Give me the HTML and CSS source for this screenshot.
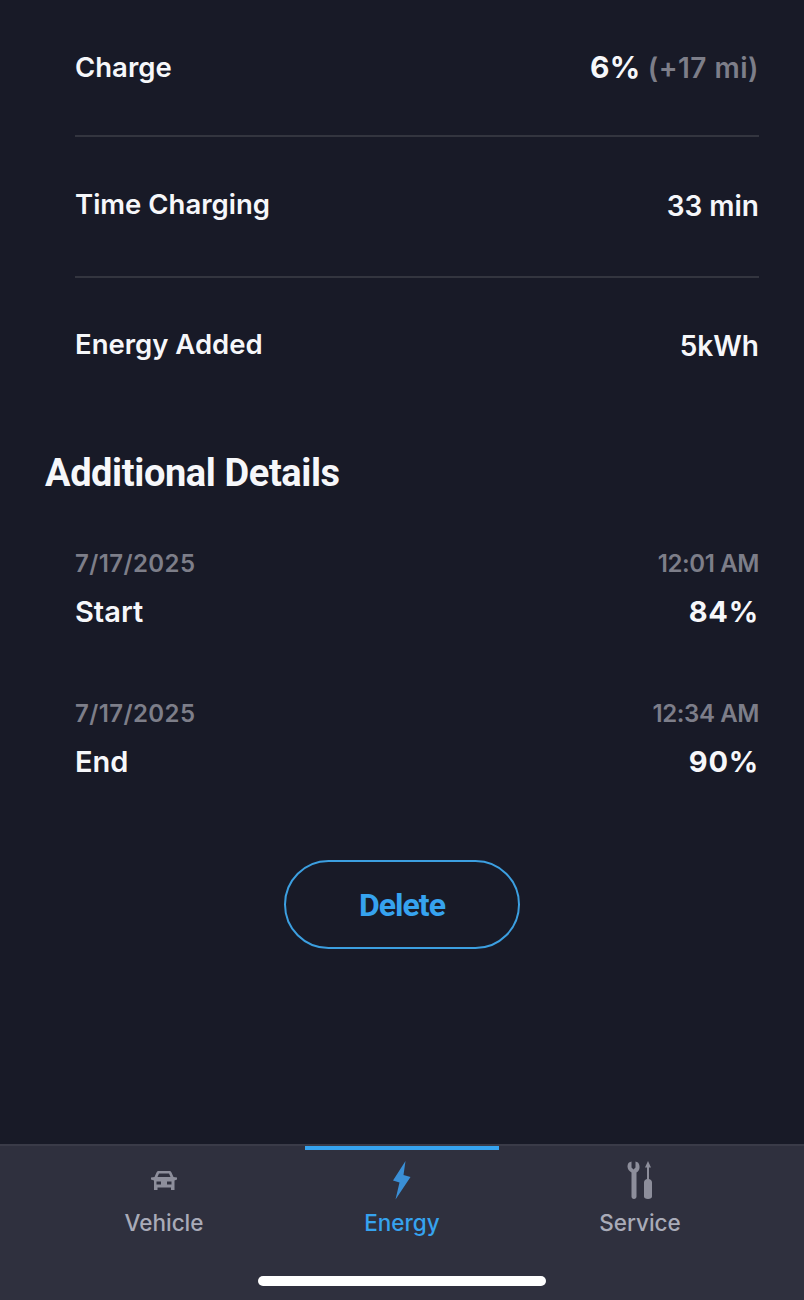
FILE: index.html
```html
<!DOCTYPE html>
<html lang="en">
<head>
  <meta charset="UTF-8" />
  <meta name="viewport" content="width=device-width, initial-scale=1.0" />
  <title>Charge Details</title>
  <link rel="stylesheet" href="styles.css">
</head>
<body>

  <main class="content">
    <section class="summary">
      <div class="summary-row">
        <span class="charge-label">Charge</span>
        <span class="value charge-value"><span class="percent">6%</span> <span class="muted range">(+17 mi)</span></span>
      </div>
      <div class="summary-row">
        <span class="label">Time Charging</span>
        <span class="value">33 min</span>
      </div>
      <div class="summary-row">
        <span class="label">Energy Added</span>
        <span class="value">5kWh</span>
      </div>
    </section>

    <h2>Additional Details</h2>

    <section class="details">
      <div class="detail">
        <div class="detail-line muted"><span class="date">7/17/2025</span><span class="time">12:01 AM</span></div>
        <div class="detail-line"><span>Start</span><span class="reading">84%</span></div>
      </div>
      <div class="detail">
        <div class="detail-line muted"><span class="date">7/17/2025</span><span class="time">12:34 AM</span></div>
        <div class="detail-line"><span>End</span><span class="reading">90%</span></div>
      </div>
    </section>

    <button class="delete" type="button">Delete</button>
  </main>

  <nav class="tabs">
    <a class="tab" href="#">
      <svg class="tab-icon" width="28" height="40" viewBox="0 0 28 40" aria-hidden="true">
        <path fill="currentColor" fill-rule="evenodd" d="M1 17.500l3.500-.5 2-4.500c.4-.9 1-1.500 2-1.500h11c1 0 1.600.6 2 1.500l2 4.500 3.500.5v2l-2.500 1v9.500h-3.500v-2.500H7.500V30H4v-9.500l-3-1zM9 13.500L7.500 17h13L19 13.500zM6.500 21.500v3h4.500v-3zm10.500 0v3h4.500v-3z"/>
      </svg>
      <span>Vehicle</span>
    </a>
    <a class="tab active" href="#">
      <svg class="tab-icon" width="28" height="40" viewBox="0 0 28 40" aria-hidden="true">
        <path fill="currentColor" d="M17.500 1L5 20.500l6.500 2L7.500 39.500 22.500 17l-7-2z"/>
      </svg>
      <span>Energy</span>
    </a>
    <a class="tab" href="#">
      <svg class="tab-icon" width="28" height="40" viewBox="0 0 28 40" aria-hidden="true">
        <path fill="currentColor" d="M3 2.500l2.500-1v6l2 2 2-2v-6l2.500 1c1.300 1.500 1.700 3.500 1.500 5.500-.3 2-1.400 3.500-3 4.500v24c0 1.600-1 2.500-2.500 2.500S5.500 38.100 5.500 36.500v-24C3.100 11 1.500 9 1.500 6.500c0-1.500.5-3 1.500-4z"/>
        <path fill="currentColor" d="M22 1l3 6.500h-2v11.500c1.800.5 3 1.800 3 3.500v14c0 1.600-1.400 2.500-4 2.500s-4-.9-4-2.500v-14c0-1.700 1.200-3 3-3.500V7.500h-2z"/>
      </svg>
      <span>Service</span>
    </a>
    <div class="home-bar"></div>
  </nav>

</body>
</html>
```

FILE: styles.css
```css
* {
  box-sizing: border-box;
}

body {
  margin: 0;
  height: 1300px;
  display: flex;
  flex-direction: column;
  overflow: hidden;
  background-color: #181a27;
  color: #f6f7fa;
  font-family: Inter, sans-serif;
}

.content {
  flex: 1;
  padding: 0 45px;
}

.summary {
  margin: 0 0 0 30px;
}

.summary-row {
  display: flex;
  justify-content: space-between;
  align-items: center;
  height: 141px;
  padding-bottom: 2px;
  font-size: 27.5px;
  font-weight: 600;
  border-bottom: 2px solid #33353f;
}

.summary-row:first-child {
  height: 137px;
  padding-bottom: 0;
}

.summary-row:last-child {
  height: 136px;
  padding-bottom: 0;
  border-bottom: none;
}

.label {
  padding-bottom: 4px;
}

.charge-label,
.charge-value {
  padding-bottom: 2px;
}

.value {
  font-size: 28px;
}

.percent {
  font-size: 30px;
  font-weight: 700;
  letter-spacing: 0.4px;
}

.range {
  letter-spacing: 0.5px;
}

.muted {
  color: #7d7e89;
}

h2 {
  margin: 37px 0 0;
  font-family: Roboto, sans-serif;
  font-size: 38px;
  line-height: 44px;
  font-weight: 700;
  letter-spacing: -0.4px;
}

.details {
  margin: 46px 0 0 30px;
}

.detail {
  margin-bottom: 54px;
}

.detail-line {
  display: flex;
  justify-content: space-between;
  height: 52px;
  align-items: center;
  font-size: 29px;
  font-weight: 600;
}

.detail-line.muted {
  font-size: 24px;
  height: 44px;
}

.reading {
  font-weight: 700;
  letter-spacing: 0.8px;
}

.date {
  letter-spacing: 0.4px;
}

.time {
  letter-spacing: -0.4px;
}

.delete {
  display: block;
  width: 236px;
  height: 89px;
  margin: 73px auto 0;
  padding: 0;
  background: transparent;
  border: 2px solid #3c9fe0;
  border-radius: 45px;
  color: #36a3ef;
  font-family: Roboto, sans-serif;
  font-size: 32px;
  font-weight: 700;
  letter-spacing: -1px;
}

.tabs {
  position: relative;
  display: flex;
  justify-content: center;
  height: 156px;
  background-color: #2f303e;
  border-top: 2px solid #3a3b48;
}

.tab {
  position: relative;
  width: 238px;
  display: flex;
  flex-direction: column;
  align-items: center;
  color: #a9abb8;
  text-decoration: none;
  font-size: 22.5px;
  font-weight: 500;
  padding-top: 14px;
}

.tab .tab-icon {
  color: #8d8e9b;
}

.tab.active {
  color: #36a3ef;
}

.tab.active::before {
  content: "";
  position: absolute;
  top: 0;
  left: 22px;
  width: 194px;
  height: 4px;
  background-color: #36a3ef;
}

.tab.active .tab-icon {
  color: #3a8fd6;
}

.tab-icon {
  margin-bottom: 9px;
}

.home-bar {
  position: absolute;
  left: 258px;
  top: 130px;
  width: 288px;
  height: 10px;
  background-color: #fff;
  border-radius: 5px;
}
```
